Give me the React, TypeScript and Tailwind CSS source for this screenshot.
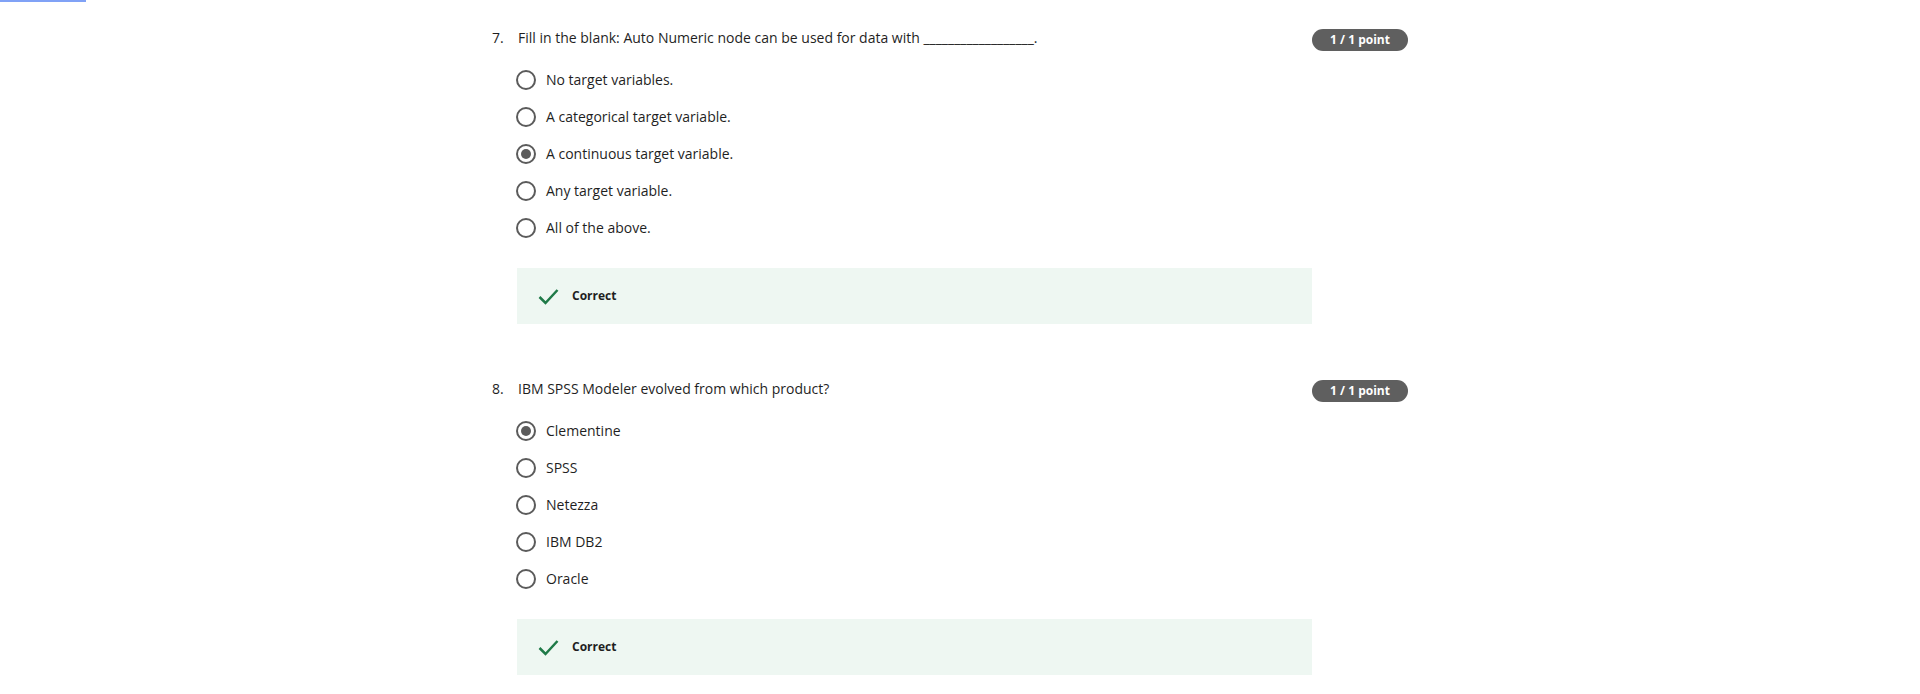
import React from 'react';

interface Question {
  num: number;
  text: string;
  options: string[];
  selected: number;
}

const questions: Question[] = [
  {
    num: 7,
    text: 'Fill in the blank: Auto Numeric node can be used for data with __________________.',
    options: [
      'No target variables.',
      'A categorical target variable.',
      'A continuous target variable.',
      'Any target variable.',
      'All of the above.',
    ],
    selected: 2,
  },
  {
    num: 8,
    text: 'IBM SPSS Modeler evolved from which product?',
    options: ['Clementine', 'SPSS', 'Netezza', 'IBM DB2', 'Oracle'],
    selected: 0,
  },
];

function Radio({ checked }: { checked: boolean }) {
  return (
    <span className="w-[20px] h-[20px] rounded-full border-2 border-[#5b5b5b] flex items-center justify-center shrink-0">
      {checked && <span className="w-[10px] h-[10px] rounded-full bg-[#5b5b5b]" />}
    </span>
  );
}

function QuestionBlock({ q }: { q: Question }) {
  return (
    <div>
      <div className="flex items-start justify-between h-[20px]">
        <div className="flex text-[14px] leading-[20px] text-[#1f1f1f]">
          <span className="w-[26px]">{q.num}.</span>
          <span>{q.text}</span>
        </div>
        <span className="mt-[1px] w-[96px] h-[22px] rounded-full bg-[#5f5f5f] text-white text-[12px] font-bold flex items-center justify-center">
          1 / 1 point
        </span>
      </div>

      <div className="mt-[13px] pl-[24px]">
        {q.options.map((opt, i) => (
          <div key={opt} className="h-[37px] flex items-center gap-[10px] text-[14px] text-[#1f1f1f]">
            <Radio checked={i === q.selected} />
            <span>{opt}</span>
          </div>
        ))}
      </div>

      <div className="mt-[22px] ml-[25px] w-[795px] h-[56px] bg-[#eef7f2] flex items-center pl-[21px] gap-[13px]">
        <svg width="21" height="17" viewBox="0 0 21 17" fill="none">
          <path d="M1.5 9 L7.5 15 L19.5 2" stroke="#1f7a48" strokeWidth="2.5" />
        </svg>
        <span className="text-[12px] font-bold text-[#1f1f1f]">Correct</span>
      </div>
    </div>
  );
}

export default function App() {
  return (
    <div className="relative w-full h-[694px] bg-white overflow-hidden" style={{ fontFamily: '"Open Sans", "Noto Sans", sans-serif' }}>
      <div className="absolute left-0 top-0 w-[86px] h-[2px] bg-[#80a2f6]" />
      <div className="ml-[492px] w-[916px] pt-[28px] flex flex-col gap-[55px]">
        {questions.map((q) => (
          <QuestionBlock key={q.num} q={q} />
        ))}
      </div>
    </div>
  );
}
